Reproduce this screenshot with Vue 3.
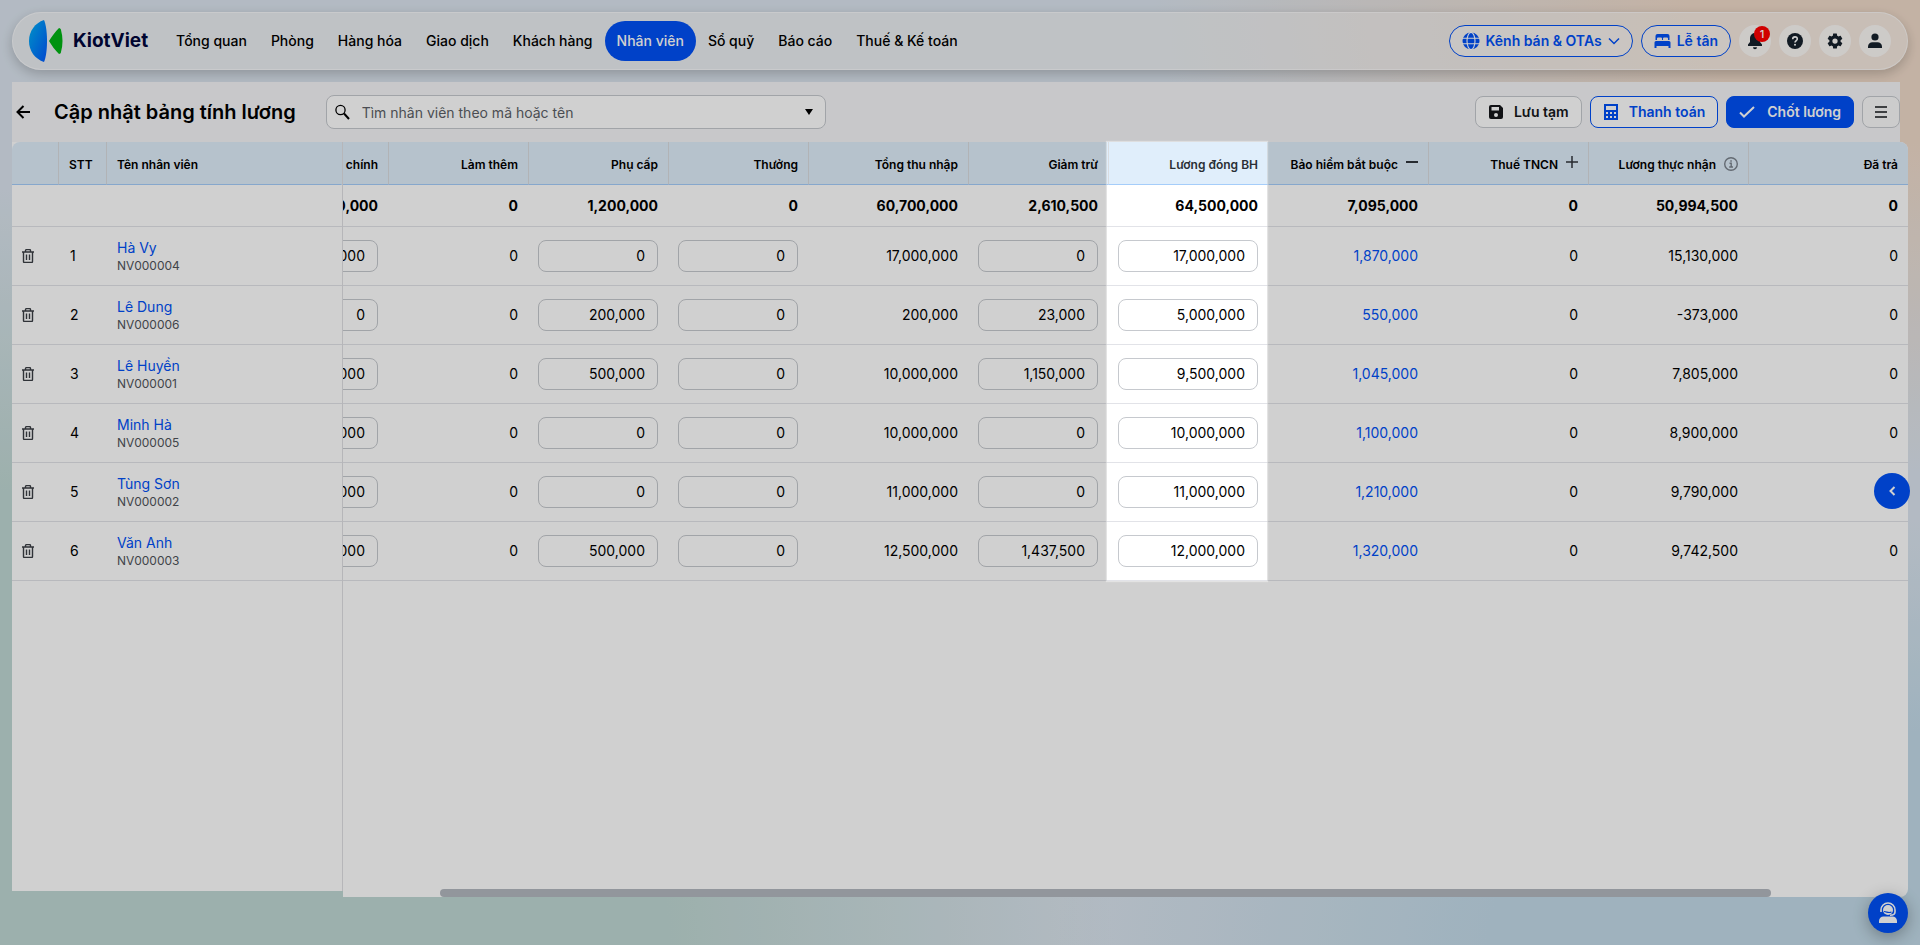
<template>
    <div class="page">
        <header class="header">
            <a class="logo" href="#">
                <svg width="34" height="42" viewBox="0 0 34 42">
                    <defs>
                        <linearGradient id="logoBlue" x1="0" x2="1" y1="0" y2="1">
                            <stop offset="0" stop-color="#00b4f5" />
                            <stop offset="1" stop-color="#0058ff" />
                        </linearGradient>
                    </defs>
                    <path d="M15 0C6 3 0 11 0 21s6 18 15 21c4-9 4-33 0-42z" fill="url(#logoBlue)" />
                    <path d="M20 21c3-5 6-9 10-13 1 0 2 1 2 2 2 7 2 15 0 22 0 1-1 2-2 2-4-4-7-8-10-13z" fill="#00b414" />
                </svg>
                <span>KiotViet</span>
            </a>
            <nav class="nav">
                <a v-for="item in menus" :key="item" href="#" :class="{ 'is-active': item === activeMenu }">{{ item }}</a>
            </nav>
            <div class="header-actions">
                <button class="pill">
                    <svg width="18" height="18" viewBox="0 0 18 18">
                        <circle cx="9" cy="9" r="8.5" fill="currentColor" />
                        <g fill="none" stroke="#fff" stroke-width="1.1">
                            <ellipse cx="9" cy="9" rx="4" ry="8.6" />
                            <path d="M0 6.2h18M0 11.8h18" />
                        </g>
                    </svg>
                    <span>Kênh bán &amp; OTAs</span>
                    <svg class="caret" width="12" height="8" viewBox="0 0 12 8">
                        <path d="M1 1.5l5 5 5-5" fill="none" stroke="currentColor" stroke-width="1.5" />
                    </svg>
                </button>
                <button class="pill">
                    <svg width="17" height="16" viewBox="0 0 16 16" fill="currentColor">
                        <path d="M1 7V3a2 2 0 0 1 2-2h10a2 2 0 0 1 2 2v4h-1.500V5.500a1 1 0 0 0-1-1H9.500a1 1 0 0 0-1 1V7h-1V5.500a1 1 0 0 0-1-1h-3a1 1 0 0 0-1 1V7z" />
                        <path d="M0 9.500A1.500 1.500 0 0 1 1.500 8h13A1.500 1.500 0 0 1 16 9.500V15h-2v-2H2v2H0z" />
                    </svg>
                    <span>Lễ tân</span>
                </button>
                <button class="round" aria-label="Thông báo">
                    <svg width="16" height="18" viewBox="0 0 16 18" fill="currentColor">
                        <path d="M8 1C4.800 1 3 3.500 3 6.500V10l-2 2.500V14h14v-1.500L13 10V6.500C13 3.500 11.200 1 8 1zM6 15.200h4a2 2 0 0 1-4 0z" />
                    </svg>
                    <span class="badge">1</span>
                </button>
                <button class="round" aria-label="Trợ giúp">
                    <svg width="16" height="16" viewBox="0 0 16 16">
                        <circle cx="8" cy="8" r="8" fill="currentColor" />
                        <path d="M5.700 6.200C5.700 4.700 6.700 3.900 8 3.900s2.300.9 2.300 2.100C10.300 7.500 8 7.600 8 9.500" fill="none" stroke="#fff" stroke-width="1.600" />
                        <circle cx="8" cy="11.700" r="1" fill="#fff" />
                    </svg>
                </button>
                <button class="round" aria-label="Cài đặt">
                    <svg width="18" height="18" viewBox="0 0 24 24" fill="currentColor">
                        <path d="M19.430 12.980c.04-.32.07-.64.07-.98s-.03-.66-.07-.98l2.110-1.650c.19-.15.24-.42.12-.64l-2-3.460c-.12-.22-.39-.3-.61-.22l-2.490 1c-.52-.4-1.080-.73-1.690-.98l-.38-2.650A.49.49 0 0 0 14 2h-4c-.25 0-.46.18-.49.42l-.38 2.650c-.61.25-1.170.59-1.690.98l-2.490-1c-.23-.09-.49 0-.61.22l-2 3.460c-.13.22-.07.49.12.64l2.110 1.650c-.04.32-.07.65-.07.98s.03.66.07.98l-2.110 1.650c-.19.15-.24.42-.12.64l2 3.460c.12.22.39.3.61.22l2.490-1c.52.4 1.080.73 1.690.98l.38 2.650c.03.24.24.42.49.42h4c.25 0 .46-.18.49-.42l.38-2.650c.61-.25 1.170-.59 1.690-.98l2.490 1c.23.09.49 0 .61-.22l2-3.460c.12-.22.07-.49-.12-.64zM12 15.500a3.500 3.500 0 1 1 0-7 3.500 3.500 0 0 1 0 7z" />
                    </svg>
                </button>
                <button class="round" aria-label="Tài khoản">
                    <svg width="14" height="16" viewBox="0 0 14 16" fill="currentColor">
                        <circle cx="7" cy="4" r="3.600" />
                        <path d="M0 15v-1.500C0 11 2 9.300 4.500 9.300h5C12 9.300 14 11 14 13.500V15z" />
                    </svg>
                </button>
            </div>
        </header>

        <section class="toolbar">
            <button class="back" aria-label="Quay lại">
                <svg width="14" height="14" viewBox="0 0 14 14" fill="none" stroke="currentColor" stroke-width="2">
                    <path d="M14 7H1.500M7.500 1l-6 6 6 6" />
                </svg>
            </button>
            <h1>Cập nhật bảng tính lương</h1>
            <div class="search">
                <svg width="15" height="16" viewBox="0 0 15 16" fill="none" stroke="currentColor">
                    <circle cx="5.500" cy="6" r="4.600" stroke-width="1.300" />
                    <path d="M9 9.500l5 5.500" stroke-width="2" />
                </svg>
                <input v-model="keyword" type="text" aria-label="Tìm nhân viên" placeholder="Tìm nhân viên theo mã hoặc tên">
                <svg width="8" height="6" viewBox="0 0 8 6" fill="currentColor">
                    <path d="M0 0h8L4 6z" />
                </svg>
            </div>
            <div class="toolbar-actions">
                <button class="btn">
                    <svg width="16" height="16" viewBox="0 0 16 16">
                        <path d="M3 1h9l3 3v9a2 2 0 0 1-2 2H3a2 2 0 0 1-2-2V3a2 2 0 0 1 2-2z" fill="currentColor" />
                        <path d="M3.500 3h7.500v3.500H3.500z" fill="#fff" />
                        <circle cx="8" cy="11" r="2" fill="#fff" />
                    </svg>
                    <span>Lưu tạm</span>
                </button>
                <button class="btn is-outline">
                    <svg width="16" height="16" viewBox="0 0 16 16">
                        <path d="M1 0h14v16H1z" fill="currentColor" />
                        <path d="M3 2h10v4H3zM3 8h2v2H3zM7 8h2v2H7zM11 8h2v2h-2zM3 12h2v2H3zM7 12h2v2H7zM11 12h2v2h-2z" fill="#fff" />
                    </svg>
                    <span>Thanh toán</span>
                </button>
                <button class="btn is-primary">
                    <svg width="16" height="16" viewBox="0 0 16 16" fill="none" stroke="currentColor" stroke-width="2">
                        <path d="M1 8.500l4 4L15 3" />
                    </svg>
                    <span>Chốt lương</span>
                </button>
                <button class="btn is-icon" aria-label="Tùy chọn">
                    <svg width="12" height="12" viewBox="0 0 12 12" fill="none" stroke="currentColor" stroke-width="1.500">
                        <path d="M0 1h12M0 6h12M0 11h12" />
                    </svg>
                </button>
            </div>
        </section>

        <main class="sheet">
            <div class="frozen">
                <table>
                    <colgroup>
                        <col class="col-action">
                        <col class="col-index">
                        <col>
                    </colgroup>
                    <thead>
                        <tr>
                            <th></th>
                            <th>STT</th>
                            <th>Tên nhân viên</th>
                        </tr>
                    </thead>
                    <tbody>
                        <tr class="total">
                            <td></td>
                            <td></td>
                            <td></td>
                        </tr>
                        <tr v-for="(row, i) in rows" :key="row.code">
                            <td>
                                <button class="trash" :aria-label="'Xóa ' + row.name">
                                    <svg width="12" height="14" viewBox="0 0 12 14" fill="none" stroke="currentColor" stroke-width="1.400">
                                        <path d="M0 3h12M1.500 3v9.500a1 1 0 0 0 1 1h7a1 1 0 0 0 1-1V3M3.500 3V1.600a1 1 0 0 1 1-1h3a1 1 0 0 1 1 1V3M4.500 5.500v5.500M7.500 5.500v5.500" />
                                    </svg>
                                </button>
                            </td>
                            <td>{{ i + 1 }}</td>
                            <td>
                                <a class="name" href="#">{{ row.name }}</a>
                                <span class="code">{{ row.code }}</span>
                            </td>
                        </tr>
                    </tbody>
                </table>
            </div>

            <div class="scroller">
                <div class="viewport">
                    <table>
                        <colgroup>
                            <col v-for="col in columns" :key="col.key" :class="'is-' + col.size">
                        </colgroup>
                        <thead>
                            <tr>
                                <th v-for="col in columns" :key="col.key" :class="{ 'is-focused': col.key === 'base' }">
                                    <span class="th-inner">
                                        {{ col.title }}
                                        <svg v-if="col.icon === 'minus'" width="12" height="12" viewBox="0 0 12 12" stroke="currentColor" stroke-width="2">
                                            <path d="M0 3h12" />
                                        </svg>
                                        <svg v-if="col.icon === 'plus'" width="12" height="12" viewBox="0 0 12 12" stroke="currentColor" stroke-width="1.500">
                                            <path d="M0 3h12M6-3v12" />
                                        </svg>
                                        <svg v-if="col.icon === 'info'" class="info" width="14" height="14" viewBox="0 0 14 14" fill="none" stroke="currentColor">
                                            <circle cx="7" cy="6" r="6.300" stroke-width="1.400" />
                                            <path d="M5.500 5.200H7.200V9M5.200 9h3.800M6.300 3h1.500" stroke-width="1.400" />
                                        </svg>
                                    </span>
                                </th>
                            </tr>
                        </thead>
                        <tbody>
                            <tr class="total">
                                <td v-for="col in columns" :key="col.key">{{ format(totalOf(col.key)) }}</td>
                            </tr>
                            <tr v-for="row in rows" :key="row.code">
                                <td v-for="col in columns" :key="col.key">
                                    <input v-if="col.editable" type="text" :value="format(row[col.key])" :aria-label="col.title + ' - ' + row.name">
                                    <a v-else-if="col.link" href="#">{{ format(row[col.key]) }}</a>
                                    <template v-else>{{ format(row[col.key]) }}</template>
                                </td>
                            </tr>
                        </tbody>
                    </table>
                </div>
                <div class="scrollbar"></div>
                <div class="spotlight"></div>
            </div>
        </main>

        <button class="expand" aria-label="Mở rộng">
            <svg width="8" height="10" viewBox="0 0 8 10" fill="none" stroke="currentColor" stroke-width="2">
                <path d="M6.500 1l-4 4 4 4" />
            </svg>
        </button>
        <button class="support" aria-label="Hỗ trợ">
            <svg width="20" height="22" viewBox="0 0 20 22">
                <circle cx="10" cy="8" r="5" fill="#fff" />
                <path d="M3 10V8a7 7 0 0 1 14 0v2c0 2-2 3.300-5 3.300" fill="none" stroke="#fff" stroke-width="1.600" />
                <path d="M6 9.500c3 0 4 2 7.500.5" fill="none" stroke="#0050f5" stroke-width="1.200" />
                <path d="M1 21v-2c0-2.500 2-4.500 4.500-4.500h9c2.500 0 4.500 2 4.500 4.500v2z" fill="#fff" />
            </svg>
        </button>
    </div>
</template>

<script setup>
import { ref } from 'vue'

const menus = ['Tổng quan', 'Phòng', 'Hàng hóa', 'Giao dịch', 'Khách hàng', 'Nhân viên', 'Sổ quỹ', 'Báo cáo', 'Thuế & Kế toán']
const activeMenu = ref('Nhân viên')
const keyword = ref('')

const columns = [
    { key: 'main', title: 'Lương chính', size: 'narrow', editable: true },
    { key: 'overtime', title: 'Làm thêm', size: 'narrow' },
    { key: 'allowance', title: 'Phụ cấp', size: 'narrow', editable: true },
    { key: 'bonus', title: 'Thưởng', size: 'narrow', editable: true },
    { key: 'income', title: 'Tổng thu nhập', size: 'wide' },
    { key: 'deduction', title: 'Giảm trừ', size: 'narrow', editable: true },
    { key: 'base', title: 'Lương đóng BH', size: 'wide', editable: true },
    { key: 'insurance', title: 'Bảo hiểm bắt buộc', size: 'wide', link: true, icon: 'minus' },
    { key: 'tax', title: 'Thuế TNCN', size: 'wide', icon: 'plus' },
    { key: 'net', title: 'Lương thực nhận', size: 'wide', icon: 'info' },
    { key: 'paid', title: 'Đã trả', size: 'wide' }
]

const rows = ref([
    { name: 'Hà Vy', code: 'NV000004', main: 17000000, overtime: 0, allowance: 0, bonus: 0, income: 17000000, deduction: 0, base: 17000000, insurance: 1870000, tax: 0, net: 15130000, paid: 0 },
    { name: 'Lê Dung', code: 'NV000006', main: 0, overtime: 0, allowance: 200000, bonus: 0, income: 200000, deduction: 23000, base: 5000000, insurance: 550000, tax: 0, net: -373000, paid: 0 },
    { name: 'Lê Huyền', code: 'NV000001', main: 9500000, overtime: 0, allowance: 500000, bonus: 0, income: 10000000, deduction: 1150000, base: 9500000, insurance: 1045000, tax: 0, net: 7805000, paid: 0 },
    { name: 'Minh Hà', code: 'NV000005', main: 10000000, overtime: 0, allowance: 0, bonus: 0, income: 10000000, deduction: 0, base: 10000000, insurance: 1100000, tax: 0, net: 8900000, paid: 0 },
    { name: 'Tùng Sơn', code: 'NV000002', main: 11000000, overtime: 0, allowance: 0, bonus: 0, income: 11000000, deduction: 0, base: 11000000, insurance: 1210000, tax: 0, net: 9790000, paid: 0 },
    { name: 'Văn Anh', code: 'NV000003', main: 12000000, overtime: 0, allowance: 500000, bonus: 0, income: 12500000, deduction: 1437500, base: 12000000, insurance: 1320000, tax: 0, net: 9742500, paid: 0 }
])

function totalOf(key) {
    return rows.value.reduce((sum, row) => sum + row[key], 0)
}

function format(val) {
    return val.toLocaleString('en-US')
}
</script>

<style>
body {
    margin: 0;
}
</style>

<style scoped>
.page {
    min-height: 100vh;
    box-sizing: border-box;
    padding: 12px 12px 48px;
    display: flex;
    flex-direction: column;
    overflow: hidden;
    position: relative;
    font-family: Inter, 'Liberation Sans', sans-serif;
    font-size: 14px;
    line-height: 20px;
    color: #15171a;
    background:
        radial-gradient(ellipse 40% 50% at 100% 0%, #f0dbca 30%, transparent 100%),
        radial-gradient(ellipse 45% 45% at 100% 100%, #c3dbe9 50%, transparent 100%),
        radial-gradient(ellipse 58% 80% at 0% 100%, #c0d8d4 60%, transparent 100%),
        #dce5ef;
}

a {
    color: #0050f5;
    text-decoration: none;
}

button {
    font: inherit;
    color: inherit;
    padding: 0;
    border: 0;
    background: none;
    cursor: pointer;
}

svg {
    flex: none;
    display: block;
}

.header {
    height: 58px;
    box-sizing: border-box;
    padding: 0 16px;
    display: flex;
    align-items: center;
    border: 1px solid rgba(255, 255, 255, .6);
    border-radius: 29px;
    background: rgba(250, 248, 246, .5);
    box-shadow: 0 4px 12px rgba(0, 0, 0, .2);
}

.logo {
    display: flex;
    align-items: center;
    gap: 10px;
    color: #00063c;
    font-size: 19px;
    font-weight: 700;
}

.nav {
    display: flex;
    margin-left: 16px;
}

.nav a {
    padding: 0 12px;
    border-radius: 20px;
    line-height: 40px;
    font-weight: 500;
    color: #000;
    white-space: nowrap;
}

.nav a.is-active {
    color: #fff;
    background: #0050f5;
}

.header-actions {
    display: flex;
    gap: 8px;
    margin-left: auto;
}

.pill {
    height: 32px;
    padding: 0 12px;
    display: flex;
    align-items: center;
    gap: 6px;
    border: 1px solid #0050f5;
    border-radius: 16px;
    color: #0050f5;
    font-weight: 600;
    white-space: nowrap;
    background: rgba(255, 255, 255, .4);
}

.round {
    width: 32px;
    height: 32px;
    display: flex;
    align-items: center;
    justify-content: center;
    position: relative;
    border-radius: 50%;
    color: #15202b;
    background: rgba(255, 255, 255, .7);
}

.badge {
    position: absolute;
    top: 1px;
    right: 1px;
    width: 16px;
    height: 16px;
    border-radius: 50%;
    font-size: 11px;
    line-height: 16px;
    font-weight: 500;
    color: #fff;
    background: #ff0000;
}

.toolbar {
    height: 60px;
    margin: 12px 8px 0 0;
    display: flex;
    align-items: center;
    background: #f5f6f8;
}

.back {
    padding: 4px;
    color: #000;
}

h1 {
    margin: 0 30px 0 20px;
    font-size: 20px;
    line-height: 28px;
    font-weight: 600;
    color: #000;
    white-space: nowrap;
}

.search {
    flex: 0 1 500px;
    height: 34px;
    box-sizing: border-box;
    padding: 0 12px 0 8px;
    display: flex;
    align-items: center;
    gap: 12px;
    border: 1px solid #c6c9ce;
    border-radius: 8px;
    color: #000;
    background: #fff;
}

.search input {
    flex: 1;
    min-width: 0;
    padding: 2px 0 0;
    border: 0;
    outline: 0;
    font: inherit;
    background: none;
}

.search input::placeholder {
    color: #5c5f66;
    opacity: 1;
}

.toolbar-actions {
    display: flex;
    gap: 8px;
    margin-left: auto;
}

.btn {
    height: 32px;
    padding: 0 12px;
    display: flex;
    align-items: center;
    gap: 10px;
    border: 1px solid #c6c9ce;
    border-radius: 8px;
    font-weight: 600;
    white-space: nowrap;
    background: #fff;
}

.btn.is-outline {
    color: #0050f5;
    border-color: #0050f5;
}

.btn.is-primary {
    gap: 12px;
    color: #fff;
    border-color: #0050f5;
    background: #0050f5;
}

.btn.is-icon {
    background: #fafafb;
}

.sheet {
    flex: 1;
    display: flex;
}

.frozen {
    flex: none;
    width: 330px;
    margin-bottom: 6px;
    border-right: 1px solid #dfe0e3;
    background: #fff;
}

.scroller {
    flex: 1;
    min-width: 0;
    position: relative;
    border-radius: 0 8px 8px 0;
    background: #fff;
}

/* scrolled to the last column */
.viewport {
    display: flex;
    justify-content: flex-end;
    overflow: hidden;
    border-radius: 0 8px 0 0;
}

table {
    flex: none;
    border-collapse: separate;
    border-spacing: 0;
    table-layout: fixed;
}

.frozen table {
    width: 100%;
}

.viewport table {
    width: 1660px;
    margin-right: -1px;
}

.col-action {
    width: 47px;
}

.col-index {
    width: 48px;
}

.is-narrow {
    width: 140px;
}

.is-wide {
    width: 160px;
}

th,
td {
    box-sizing: border-box;
    height: 59px;
    padding: 0 10px;
    border-bottom: 1px solid #e2e3e8;
    color: #000;
}

th {
    height: 43px;
    padding-top: 4px;
    font-size: 12px;
    line-height: 16px;
    font-weight: 600;
    text-align: left;
    white-space: nowrap;
    border-right: 1px solid #d9dce0;
    border-bottom-color: #a5cdfa;
    background: #e0eefb;
}

th:last-child {
    border-right-color: transparent;
}

.frozen th:first-child {
    border-radius: 8px 0 0 0;
}

.viewport th,
.viewport td {
    text-align: right;
}

.viewport td {
    padding-right: 11px;
}

.viewport th.is-focused {
    border-right-color: transparent;
    color: #2a2e35;
}

.th-inner {
    display: flex;
    align-items: center;
    justify-content: flex-end;
    gap: 8px;
}

.th-inner svg {
    overflow: visible;
    color: #30353b;
}

.th-inner .info {
    color: #7a828c;
}

.total td {
    height: 42px;
    font-weight: 700;
}

.viewport input {
    display: block;
    width: 100%;
    height: 32px;
    box-sizing: border-box;
    padding: 0 12px;
    border: 1px solid #c6c9ce;
    border-radius: 8px;
    font: inherit;
    color: #000;
    text-align: right;
    background: #fff;
}

.viewport td:has(input) {
    padding-left: 9px;
    padding-bottom: 1px;
}

.trash {
    display: block;
    color: #3b3f45;
}

.frozen td:nth-child(2) {
    padding-left: 11px;
}

.frozen td:nth-child(3) {
    padding-bottom: 1px;
}

.name,
.code {
    display: block;
}

.code {
    font-size: 12px;
    line-height: 16px;
    color: #50545a;
}

.scrollbar {
    position: absolute;
    left: 97px;
    right: 137px;
    bottom: 0;
    height: 8px;
    border-radius: 4px;
    background: #b4b8c0;
}

/* dims everything except the column the tour is pointing at */
.spotlight {
    position: absolute;
    z-index: 10;
    top: 0;
    right: 641px;
    width: 160px;
    height: 439px;
    pointer-events: none;
    box-shadow: 0 0 1px 1px rgba(255, 255, 255, .4), 0 0 0 9999px rgba(0, 0, 0, .184);
}

.expand,
.support {
    position: absolute;
    display: flex;
    align-items: center;
    justify-content: center;
    border-radius: 50%;
    color: #fff;
    background: #0050f5;
}

.expand {
    top: 50%;
    right: 10px;
    width: 36px;
    height: 36px;
}

.support {
    right: 12px;
    bottom: 12px;
    width: 40px;
    height: 40px;
    box-shadow: 0 4px 16px rgba(0, 0, 0, .3);
}
</style>
